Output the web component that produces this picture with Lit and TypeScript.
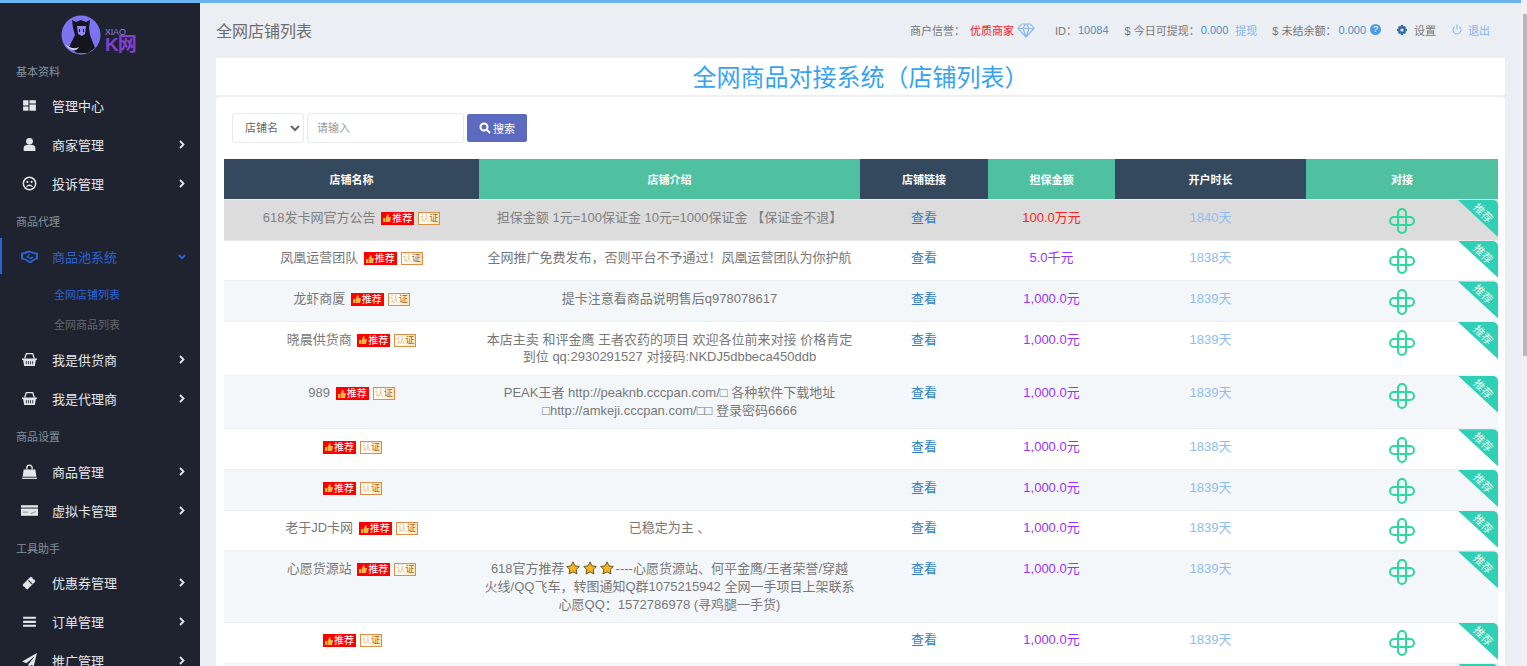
import { LitElement, html, css, svg } from 'lit';
import { customElement } from 'lit/decorators.js';

const icons: Record<string, unknown> = {
  dash: svg`<path d="M2 3h5v5H2zM8 3h6v3H8zM8 7h6v6H8zM2 9h5v4H2z"/>`,
  user: svg`<circle cx="8" cy="5" r="3.2"/><path d="M2.500 14v-2.500C2.500 9.500 4 8.500 5.500 8.500h5c1.500 0 3 1 3 3V14z"/>`,
  frown: svg`<circle cx="8" cy="8" r="5.800" fill="none" stroke="currentColor" stroke-width="1.400"/><circle cx="6" cy="6.500" r="1"/><circle cx="10" cy="6.500" r="1"/><path d="M5.200 11c1.500-1.800 4.100-1.800 5.600 0" fill="none" stroke="currentColor" stroke-width="1.200"/>`,
  shake: svg`<path d="M0 4.500l3 -.5 3-1.500h3l3 1.500 4 .5v6l-2.500.5-4 3H8l-4-2.500-4-1zM2 6v3.500l3 .8 3.500 2.200 3.500-2.300 2-.6V6l-3-.6-2-1H7L5 5.400z" fill-rule="evenodd"/><path d="M5 8.500l3-3 1 .3-2 2.200 1.500 1 2.500-1 1 1-3 1.500z"/>`,
  basket: svg`<path d="M1 7h14v1.500h-1L13 14H3L2 8.500H1z"/><path d="M3.500 7l1.500-4.500h6L12.500 7" fill="none" stroke="currentColor" stroke-width="1.200"/><path d="M5 9.500v3M7 9.500v3M9 9.500v3M11 9.500v3" stroke="#1f2330" stroke-width=".8"/>`,
  bag: svg`<path d="M2.500 6h11l1 7H1.500z"/><path d="M5.500 6V4.500a2.500 2.500 0 0 1 5 0V6" fill="none" stroke="currentColor" stroke-width="1.300"/><path d="M1 13.800h14V15H1z"/>`,
  card: svg`<path d="M0 3h16v10H0z"/><path d="M0 5h16v1.500H0z" fill="#6b6f78"/><path d="M1.500 9.500h5M9 11l5-2" stroke="#9a9da4" stroke-width="1"/>`,
  ticket: svg`<path d="M1.500 10L9 2.500l2 1c-.3 1 .5 1.800 1.500 1.500l1 2L6 14.500l-2-1c.3-1-.5-1.800-1.500-1.500z"/><path d="M7 6l3.500 3.500" stroke="#1f2330" stroke-width="1"/>`,
  bars: svg`<path d="M2 3.500h12v2H2zM2 7.300h12v2H2zM2 11h12v2H2z"/>`,
  plane: svg`<path d="M15 1L1 9l4 1.500L13 4l-6 7.500V15l2.500-2.800 2.500 1z"/>`,
};

const menu = [
  { label: '基本资料' },
  { icon: 'dash', text: '管理中心' },
  { icon: 'user', text: '商家管理', more: true },
  { icon: 'frown', text: '投诉管理', more: true },
  { label: '商品代理' },
  { icon: 'shake', text: '商品池系统', open: true },
  { icon: 'basket', text: '我是供货商', more: true },
  { icon: 'basket', text: '我是代理商', more: true },
  { label: '商品设置' },
  { icon: 'bag', text: '商品管理', more: true },
  { icon: 'card', text: '虚拟卡管理', more: true },
  { label: '工具助手' },
  { icon: 'ticket', text: '优惠券管理', more: true },
  { icon: 'bars', text: '订单管理', more: true },
  { icon: 'plane', text: '推广管理', more: true },
];

const P = '#9b30ff';
const rows = [
  { name: '618发卡网官方公告', intro: ['担保金额 1元=100保证金 10元=1000保证金 【保证金不退】'], money: '100.0万元', color: '#ff2020', days: 1840, top: true },
  { name: '凤凰运营团队', intro: ['全网推广免费发布，否则平台不予通过！凤凰运营团队为你护航'], money: '5.0千元', color: P, days: 1838 },
  { name: '龙虾商厦', intro: ['提卡注意看商品说明售后q978078617'], money: '1,000.0元', color: P, days: 1839 },
  { name: '晓晨供货商', intro: ['本店主卖 和评金鹰 王者农药的项目 欢迎各位前来对接 价格肯定', '到位 qq:2930291527 对接码:NKDJ5dbbeca450ddb'], money: '1,000.0元', color: P, days: 1839 },
  { name: '989', intro: ['PEAK王者 http://peaknb.cccpan.com/□ 各种软件下载地址', '□http://amkeji.cccpan.com/□□ 登录密码6666'], money: '1,000.0元', color: P, days: 1839 },
  { name: '', intro: [], money: '1,000.0元', color: P, days: 1838 },
  { name: '', intro: [], money: '1,000.0元', color: P, days: 1839 },
  { name: '老于JD卡网', intro: ['已稳定为主 、'], money: '1,000.0元', color: P, days: 1839 },
  { name: '心愿货源站', intro: ['618官方推荐★★★----心愿货源站、何平金鹰/王者荣誉/穿越', '火线/QQ飞车，转图通知Q群1075215942 全网一手项目上架联系', '心愿QQ：1572786978 (寻鸡腿一手货)'], money: '1,000.0元', color: P, days: 1839 },
  { name: '', intro: [], money: '1,000.0元', color: P, days: 1839 },
  { name: '', intro: [], money: '1,000.0元', color: P, days: 1839 },
];

const star = html`<svg class="star" viewBox="0 0 16 16"><path d="M8 1l2.200 4.600 5 .7-3.600 3.500.9 5L8 12.400l-4.500 2.400.9-5L.8 6.300l5-.7z" fill="#f5b51e" stroke="#5a4310" stroke-width="1"/></svg>`;

@customElement('app-root')
export class AppRoot extends LitElement {
  static styles = css`
    :host {
      display: block;
      height: 666px;
      overflow: hidden;
      font-family: "Liberation Sans", "Noto Sans CJK SC", sans-serif;
      font-size: 13px;
      background: #ebeef2;
    }
    .topline { height: 3px; margin-right: 6px; background: #6db3f2; }
    .shell { display: flex; height: 663px; }
    .side { width: 200px; flex-shrink: 0; background: #1f2330; color: #e4e6ea; overflow: hidden; }
    .logo { height: 49.500px; display: flex; gap: 4px; padding: 12px 0 0 61px; box-sizing: border-box; }
    .logo svg { width: 40px; height: 40px; }
    .brand { line-height: 1; padding-top: 13px; }
    .brand small { display: block; font-size: 9px; color: #8c7fe0; letter-spacing: -.2px; }
    .brand b { font-size: 19px; line-height: 16px; display: block; letter-spacing: -1px; color: #8440cc; }
    .label { height: 33.500px; line-height: 38px; padding-left: 16px; font-size: 11px; color: #83929c; }
    .item { position: relative; height: 39px; display: flex; align-items: center; padding-left: 21px; color: #e4e6ea; }
    .item svg.ic { width: 17px; height: 17px; fill: currentColor; margin-right: 14px; flex-shrink: 0; }
    .item .chev { position: absolute; left: 178px; top: 15px; width: 8px; height: 9px; fill: none; stroke: currentColor; stroke-width: 1.800; }
    .item.active { color: #2a62d8; }
    .item.active::before { content: ''; position: absolute; left: 0; top: 1px; bottom: 2px; width: 2px; background: #2a62d8; }
    .subs { padding: 4px 0 .5px; }
    .sub { height: 30px; line-height: 30px; padding-left: 54px; font-size: 11px; color: #62666f; }
    .sub.on { color: #2a62d8; }

    .main { flex: 1; min-width: 0; padding: 0 16px; overflow: hidden; }
    .head { height: 55px; box-sizing: border-box; padding-bottom: 2px; display: flex; align-items: center; color: #777; font-size: 11px; }
    .head h2 { flex: 1; margin: 0; font-size: 16px; font-weight: 400; color: #6b6b6b; }
    .head .rt { display: flex; align-items: center; padding-right: 15px; }
    .blue { color: #4f8fc9; }
    .red { color: #f0202a; }
    .lblue { color: #7fb6f2; }
    .head svg { display: block; }
    .q { width: 11px; height: 11px; border-radius: 50%; background: #4f9bea; color: #fff; font-size: 9px; line-height: 11px; text-align: center; margin-left: 4px; }
    .title { height: 37px; background: #fff; text-align: center; font-size: 24px; line-height: 40px; color: #36a3f0; margin-bottom: 2px; }
    .card { background: #fff; border-radius: 4px 4px 0 0; padding: 16px 7px 0 8px; }
    .search { display: flex; align-items: center; gap: 3px; padding-left: 8px; height: 30px; margin-bottom: 16px; }
    select, input { box-sizing: border-box; height: 30px; border: 1px solid #e8e9eb; border-radius: 3px; background: #fff; font: inherit; font-size: 11px; color: #666; outline: none; }
    select { width: 72px; padding-left: 8px; }
    input { width: 157px; padding-left: 9px; }
    input::placeholder { color: #9a9a9a; }
    .btn { width: 60px; height: 28px; background: #5c6bc0; color: #fff; font-size: 11px; border-radius: 2px; display: flex; align-items: center; justify-content: center; gap: 2px; }
    .btn svg { width: 12px; height: 12px; fill: none; stroke: #fff; stroke-width: 2; }
    table { width: 1274px; table-layout: fixed; border-collapse: collapse; color: #777; }
    th { height: 40px; padding: 0; font-size: 11px; font-weight: 700; color: #fff; border-bottom: 1px solid #e9ecef; }
    th.dk { background: #34495e; }
    th.gr { background: #50c1a0; }
    td { padding: 8.500px 0; line-height: 17.800px; text-align: center; vertical-align: top; border-bottom: 1px solid #edf0f3; position: relative; }
    tr.alt td { background: #f4f7fa; }
    tr.top { color: #808080; }
    tr.top td { background: #dcdcdc; border-bottom-color: #e8e8e8; }
    .link { color: #2f7fc1; }
    .days { color: #8fbdf0; }
    .tj { display: inline-flex; align-items: center; vertical-align: top; margin-top: 3px; height: 13px; padding: 0 2px 0 1px; margin-left: 2px; background: #f00; color: #fff; font-size: 10px; line-height: 13px; }
    .tj svg { width: 10px; height: 10px; margin-right: 0; }
    .rz { display: inline-block; vertical-align: top; margin-top: 3px; box-sizing: border-box; width: 22px; height: 13px; margin-left: 4px; border: 1px solid #d98f45; background: linear-gradient(90deg, #fffaf0 45%, #fbe3b0); color: #b0622a; font-size: 9px; line-height: 11px; }
    .rz em { font-style: normal; color: #dcc39b; }
    .star { width: 14px; height: 14px; vertical-align: -2px; margin: 0 1.500px; }
    .plus { display: block; width: 26px; height: 26px; margin: -1px auto -2.300px; fill: none; stroke: #2bd99c; stroke-width: 2; stroke-linecap: round; }
    .rib { position: absolute; right: 0; top: 0; width: 40px; height: 37px; overflow: hidden; }
    .rib i { position: absolute; inset: 0; background: #2fd0b5; border-top-right-radius: 5px; clip-path: polygon(0 0, 100% 0, 100% 100%); }
    .rib span { position: absolute; left: 14px; top: 7px; font-size: 11px; line-height: 12px; color: #e9f7f3; transform: rotate(45deg); white-space: nowrap; }

    .rail { width: 6px; flex-shrink: 0; background: #f1f1f1; position: relative; }
    .rail i { position: absolute; left: 2px; right: 0; top: 11px; height: 342px; background: #b8b8b8; }
  `;

  private ic(name: string) {
    return html`<svg class="ic" viewBox="0 0 16 16">${icons[name]}</svg>`;
  }

  private renderItem(m: any) {
    if (m.label) return html`<div class="label">${m.label}</div>`;
    const item = html`<div class="item ${m.open ? 'active' : ''}">
      ${this.ic(m.icon)}${m.text}
      ${m.more ? html`<svg class="chev" viewBox="0 0 8 9"><path d="M2 1l3.500 3.500L2 8"/></svg>` : ''}
      ${m.open ? html`<svg class="chev" viewBox="0 0 8 9"><path d="M.8 3l3.200 3.200L7.200 3"/></svg>` : ''}
    </div>`;
    if (!m.open) return item;
    return html`${item}<div class="subs"><div class="sub on">全网店铺列表</div><div class="sub">全网商品列表</div></div>`;
  }

  private renderIntro(line: string) {
    const parts = line.split('★');
    return parts.map((p, i) => html`${i ? star : ''}${p}`);
  }

  private renderRow(r: any, i: number) {
    const cls = r.top ? 'top' : i % 2 === 0 ? 'alt' : '';
    return html`<tr class=${cls}>
      <td>${r.name ? r.name + ' ' : ''}<span class="tj"><svg viewBox="0 0 10 10"><path d="M1 5h2v4H1zM3.500 5l2-4c1 0 1.300.8 1 2v1h2.500l-1 5H3.500z" fill="#f5b942"/></svg>推荐</span><span class="rz"><em>认</em>证</span></td>
      <td>${r.intro.map((l: string, k: number) => html`${k ? html`<br />` : ''}${this.renderIntro(l)}`)}</td>
      <td class="link">查看</td>
      <td style="color:${r.color}">${r.money}</td>
      <td class="days">${r.days}天</td>
      <td>
        <svg class="plus" viewBox="0 0 26 26"><path d="M9 16V5a4 4 0 0 1 8 0v4h4a4 4 0 0 1 0 8H11"/><path d="M17 10v11a4 4 0 0 1-8 0v-4H5a4 4 0 0 1 0-8h10"/></svg>
        <div class="rib"><i></i><span>推荐</span></div>
      </td>
    </tr>`;
  }

  render() {
    return html`
      <div class="topline"></div>
      <div class="shell">
        <aside class="side">
          <div class="logo">
            <svg viewBox="0 0 40 40"><circle cx="20" cy="20" r="19.500" fill="#7d73f0"/><path d="M11 5l4 2 5-2 5 2 4-2-1 8 1 7 5 13-7 5H16L8 32l6-12-2-7z" fill="#15151f"/><path d="M16 11h9l-1 8-3 2-4-2z" fill="#8f86f2"/><path d="M18 14h1v3h-1zM22 14h1v3h-1z" fill="#15151f"/><path d="M4 29c6 5 10 5 14 3-2 5-10 4-14-3z" fill="#d9d6fb"/></svg>
            <div class="brand"><small>XIAO</small><b>K网</b></div>
          </div>
          ${menu.map((m) => this.renderItem(m))}
        </aside>
        <div class="main">
          <div class="head">
            <h2>全网店铺列表</h2>
            <div class="rt">
              <span>商户信誉：</span><span class="red" style="margin-left:5px">优质商家</span>
              <svg style="margin-left:3px" width="18" height="18" viewBox="0 0 18 18" fill="none" stroke="#8fb8ee" stroke-width="1.200"><path d="M4.500 3h9L17 7.500 9 16 1 7.500zM1 7.500h16M6 7.500L9 16l3-8.500L9.500 3M6 7.500L8.500 3"/></svg>
              <span style="margin-left:20px">ID：</span><span class="blue" style="margin-left:1px">10084</span>
              <span style="margin-left:16px">$ 今日可提现：</span><span class="blue" style="margin-left:1px">0.000</span>
              <span class="lblue" style="margin-left:7px">提现</span>
              <span style="margin-left:15px">$ 未结余额：</span><span class="blue" style="margin-left:2px">0.000</span><span class="q">?</span>
              <svg style="margin-left:16px" width="10" height="10" viewBox="0 0 10 10"><path d="M4 0h2l.3 1.500 1.300-.6 1.400 1.400-.7 1.300L10 4v2l-1.700.4.700 1.300-1.400 1.400-1.300-.7L6 10H4l-.3-1.600-1.300.7L1 7.700l.7-1.300L0 6V4l1.700-.4L1 2.300 2.400.9l1.300.6z" fill="#2f6ba8"/><circle cx="5" cy="5" r="1.600" fill="#ebeef2"/></svg>
              <span style="margin-left:7px">设置</span>
              <svg style="margin-left:16px" width="10" height="11" viewBox="0 0 10 11" fill="none" stroke="#7fb6f2" stroke-width="1"><path d="M3 2.500a4 4 0 1 0 4 0M5 .5v5"/></svg>
              <span class="lblue" style="margin-left:6px">退出</span>
            </div>
          </div>
          <div class="title">全网商品对接系统（店铺列表）</div>
          <div class="card">
            <div class="search">
              <select><option>店铺名</option></select>
              <input placeholder="请输入" />
              <div class="btn"><svg viewBox="0 0 12 12"><circle cx="5" cy="5" r="3.500"/><path d="M7.800 7.800L11 11"/></svg>搜索</div>
            </div>
            <table>
              <colgroup><col width="255" /><col width="381" /><col width="128" /><col width="127" /><col width="191" /><col width="192" /></colgroup>
              <thead>
                <tr><th class="dk">店铺名称</th><th class="gr">店铺介绍</th><th class="dk">店铺链接</th><th class="gr">担保金额</th><th class="dk">开户时长</th><th class="gr">对接</th></tr>
              </thead>
              <tbody>${rows.map((r, i) => this.renderRow(r, i))}</tbody>
            </table>
          </div>
        </div>
        <div class="rail"><i></i></div>
      </div>
    `;
  }
}
